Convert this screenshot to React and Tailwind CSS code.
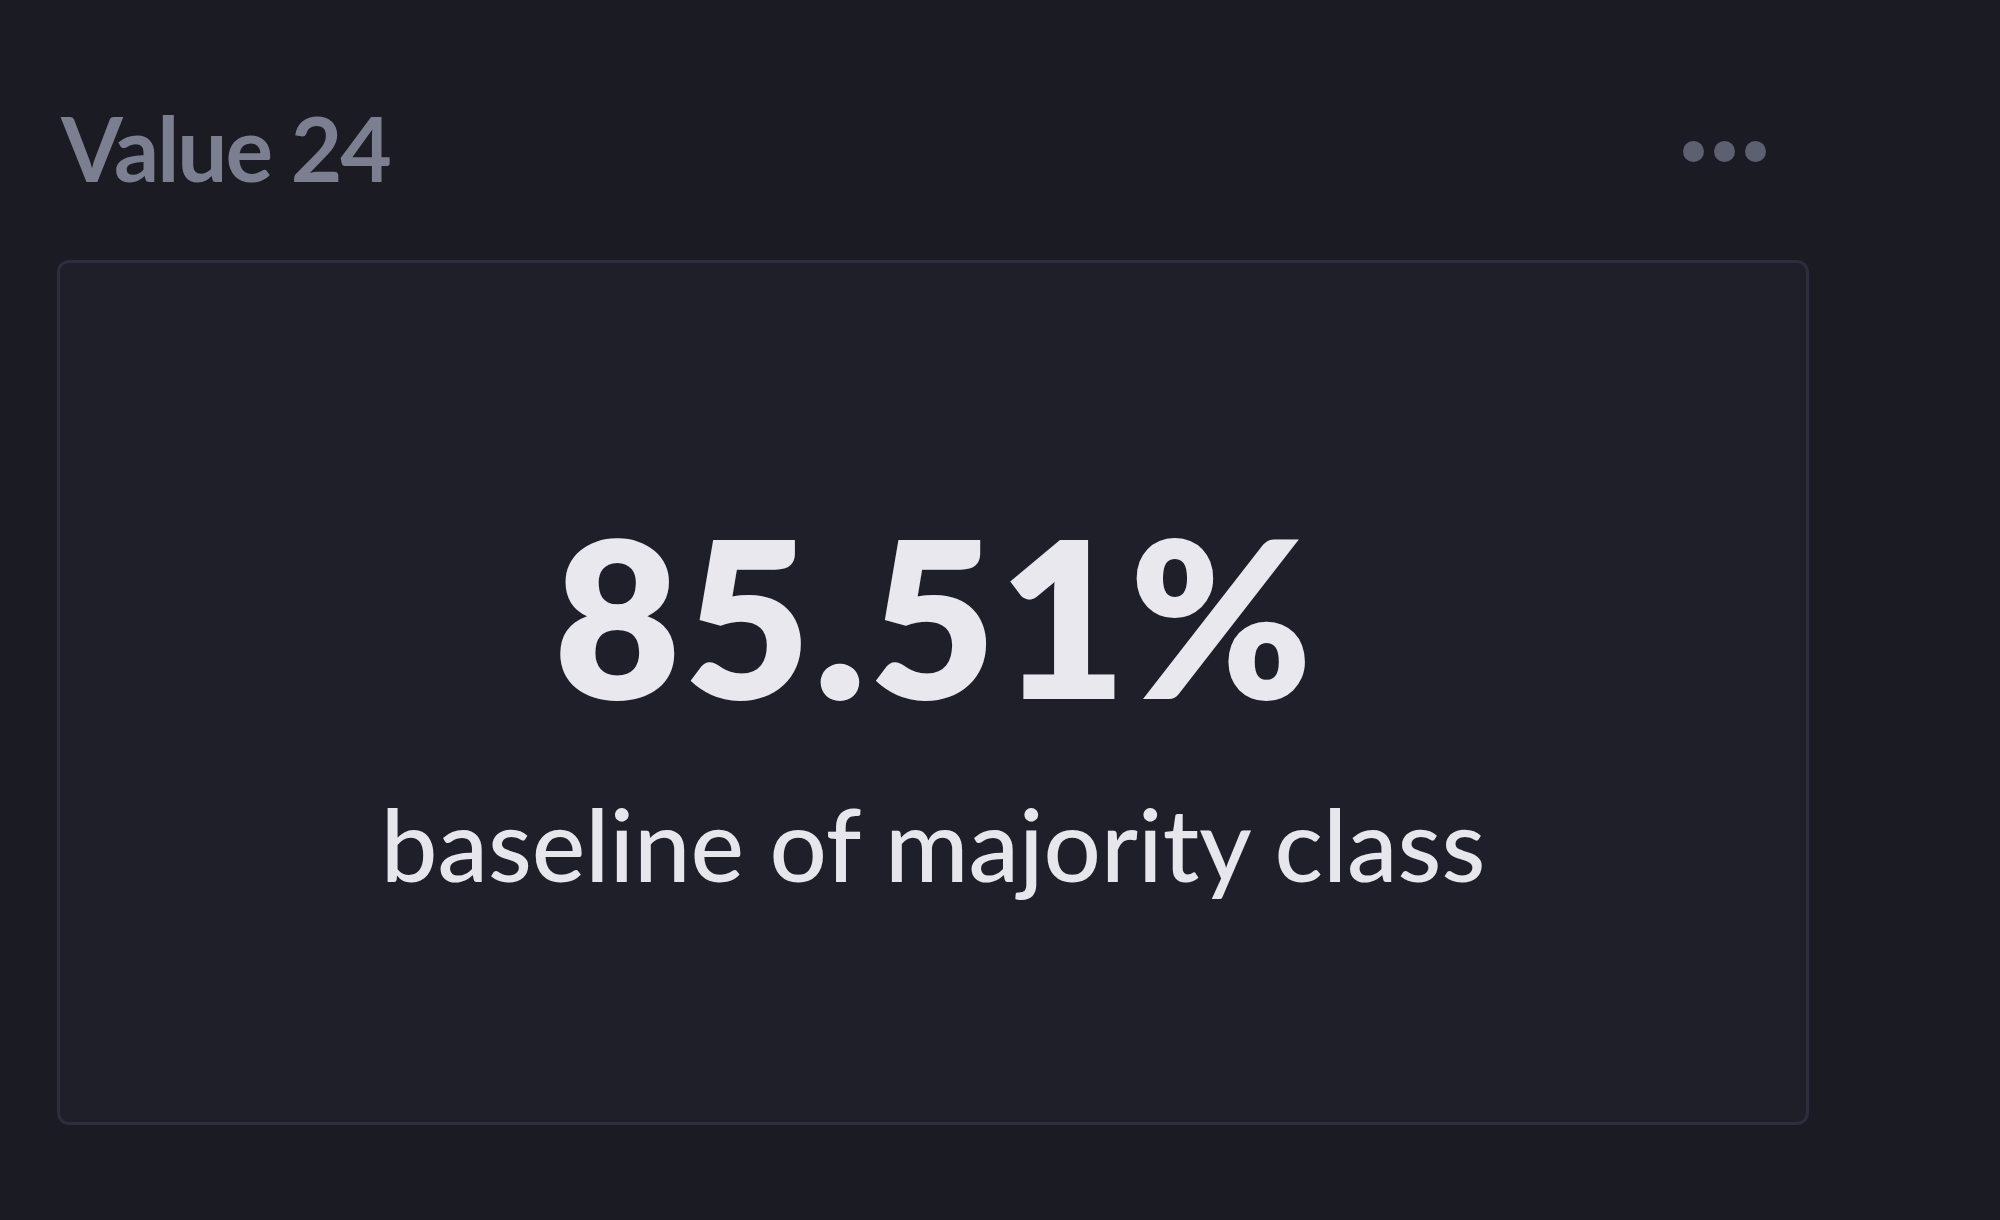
import React from 'react';

const MoreDots = () => (
  <div className="flex items-center gap-[10px] mt-[8px]">
    <span className="block w-[21px] h-[21px] rounded-full bg-[#5d6071]" />
    <span className="block w-[21px] h-[21px] rounded-full bg-[#5d6071]" />
    <span className="block w-[21px] h-[21px] rounded-full bg-[#5d6071]" />
  </div>
);

const App = () => {
  return (
    <div
      className="min-h-screen w-full bg-[#1b1b24] pt-[103px]"
      style={{ fontFamily: 'Lato, "Noto Sans", sans-serif' }}
    >
      <div className="ml-[57px] w-[1752px]">
        {/* header */}
        <div className="flex items-center justify-between h-[89px] pl-[4px] pr-[43px] mb-[68px]">
          <h2 className="text-[89px] leading-none font-bold text-[#7c7f90] tracking-[-2px]">
            Value 24
          </h2>
          <MoreDots />
        </div>

        {/* metric card */}
        <div className="h-[865px] rounded-[12px] border-[3px] border-[#2d2d3b] bg-[#1f1f2a] flex flex-col items-center justify-center pt-[14px]">
          <div className="text-[219px] leading-none font-extrabold text-[#e8e8ee] tracking-[3px] pl-[3px]">
            85.51%
          </div>
          <div className="mt-[69px] text-[101px] leading-none font-medium text-[#e6e6ec]">
            baseline of majority class
          </div>
        </div>
      </div>
    </div>
  );
};

export default App;
